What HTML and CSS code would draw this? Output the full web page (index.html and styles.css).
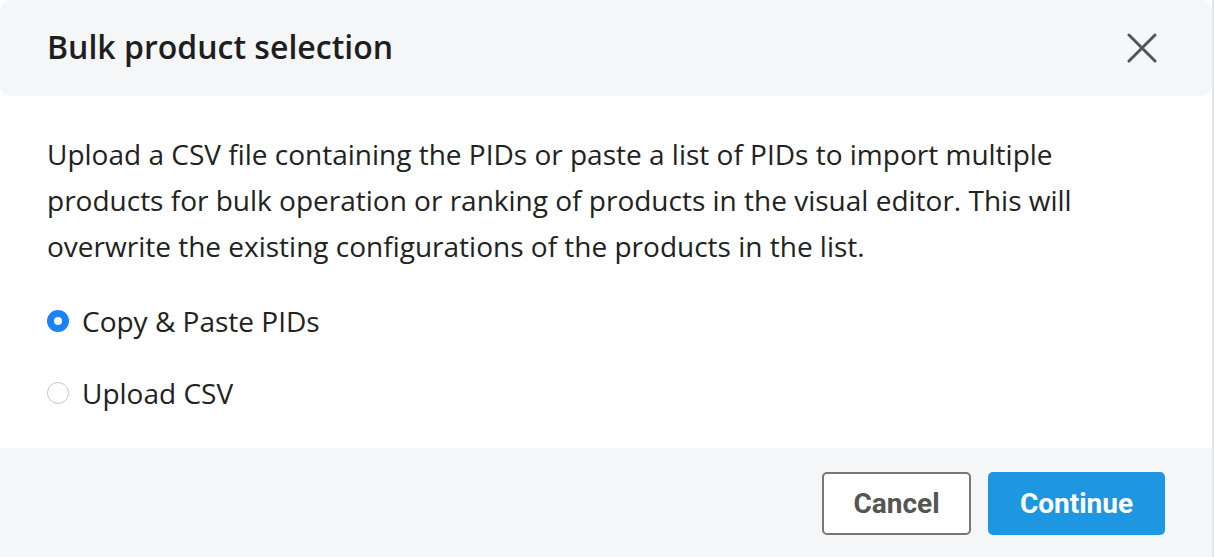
FILE: index.html
```html
<!DOCTYPE html>
<html lang="en">
<head>
<meta charset="utf-8">
<title>Bulk product selection</title>
<link rel="stylesheet" href="styles.css">
</head>
<body>
<div class="dialog">
  <header class="dialog-header">
    <h1 class="dialog-title">Bulk product selection</h1>
    <button class="close-btn" aria-label="Close">
      <svg width="30" height="30" viewBox="0 0 30 30"><path d="M2 2 L28 28 M28 2 L2 28" stroke="#555" stroke-width="3" stroke-linecap="round" fill="none"/></svg>
    </button>
  </header>
  <main class="dialog-body">
    <p class="description">Upload a CSV file containing the PIDs or paste a list of PIDs to import multiple products for bulk operation or ranking of products in the visual editor. This will overwrite the existing configurations of the products in the list.</p>
    <div class="options">
      <label class="option"><span class="radio checked"></span><span class="option-label">Copy &amp; Paste PIDs</span></label>
      <label class="option"><span class="radio"></span><span class="option-label">Upload CSV</span></label>
    </div>
  </main>
  <footer class="dialog-footer">
    <button class="btn btn-secondary">Cancel</button>
    <button class="btn btn-primary">Continue</button>
  </footer>
</div>
</body>
</html>
```
FILE: styles.css
```css
html, body {
  margin: 0;
  padding: 0;
  background: #ffffff;
}
body {
  font-family: "Open Sans", "Liberation Sans", sans-serif;
  color: #222;
  width: 1214px;
  height: 557px;
  overflow: hidden;
}
.dialog {
  width: 1212px;
  height: 557px;
  border-right: 2px solid #e4e5e7;
  display: flex;
  flex-direction: column;
  background: #fff;
}
.dialog-header {
  height: 96px;
  box-sizing: border-box;
  background: #f5f6f8;
  border-radius: 10px;
  display: flex;
  align-items: center;
  justify-content: space-between;
  padding: 0 55px 0 47px;
}
.dialog-title {
  margin: 0;
  font-size: 32px;
  font-weight: 600;
  color: #1e1e1e;
  line-height: 1;
  padding-bottom: 2px;
}
.close-btn {
  background: none;
  border: 0;
  padding: 0;
  width: 30px;
  height: 30px;
  display: flex;
  cursor: pointer;
}
.dialog-body {
  flex: 1;
  padding: 35px 47px 0 47px;
}
.description {
  margin: 0;
  font-size: 28px;
  line-height: 46px;
  color: #222;
  width: 1080px;
}
.options {
  display: flex;
  flex-direction: column;
  gap: 26px;
  margin-top: 29px;
}
.option {
  display: flex;
  align-items: center;
  gap: 13px;
  font-size: 28px;
  line-height: 46px;
  color: #222;
}
.radio {
  width: 22px;
  height: 22px;
  border-radius: 50%;
  box-sizing: border-box;
  border: 1.5px solid #c6c6c6;
  background: #fff;
  flex: none;
}
.radio.checked {
  border: 7px solid #1a82fb;
  background: #fff;
}
.dialog-footer {
  height: 109px;
  box-sizing: border-box;
  background: #f5f6f8;
  display: flex;
  justify-content: flex-end;
  align-items: flex-start;
  gap: 17px;
  padding: 24px 47px 0 0;
}
.btn {
  height: 63px;
  border-radius: 5px;
  font-family: Roboto, "Liberation Sans", sans-serif;
  font-weight: 700;
  font-size: 28px;
  cursor: pointer;
  box-sizing: border-box;
  padding: 0;
}
.btn-secondary {
  width: 149px;
  background: #fff;
  border: 2px solid #777;
  color: #555;
}
.btn-primary {
  width: 177px;
  background: #1e96e0;
  border: 0;
  color: #fff;
}
```
